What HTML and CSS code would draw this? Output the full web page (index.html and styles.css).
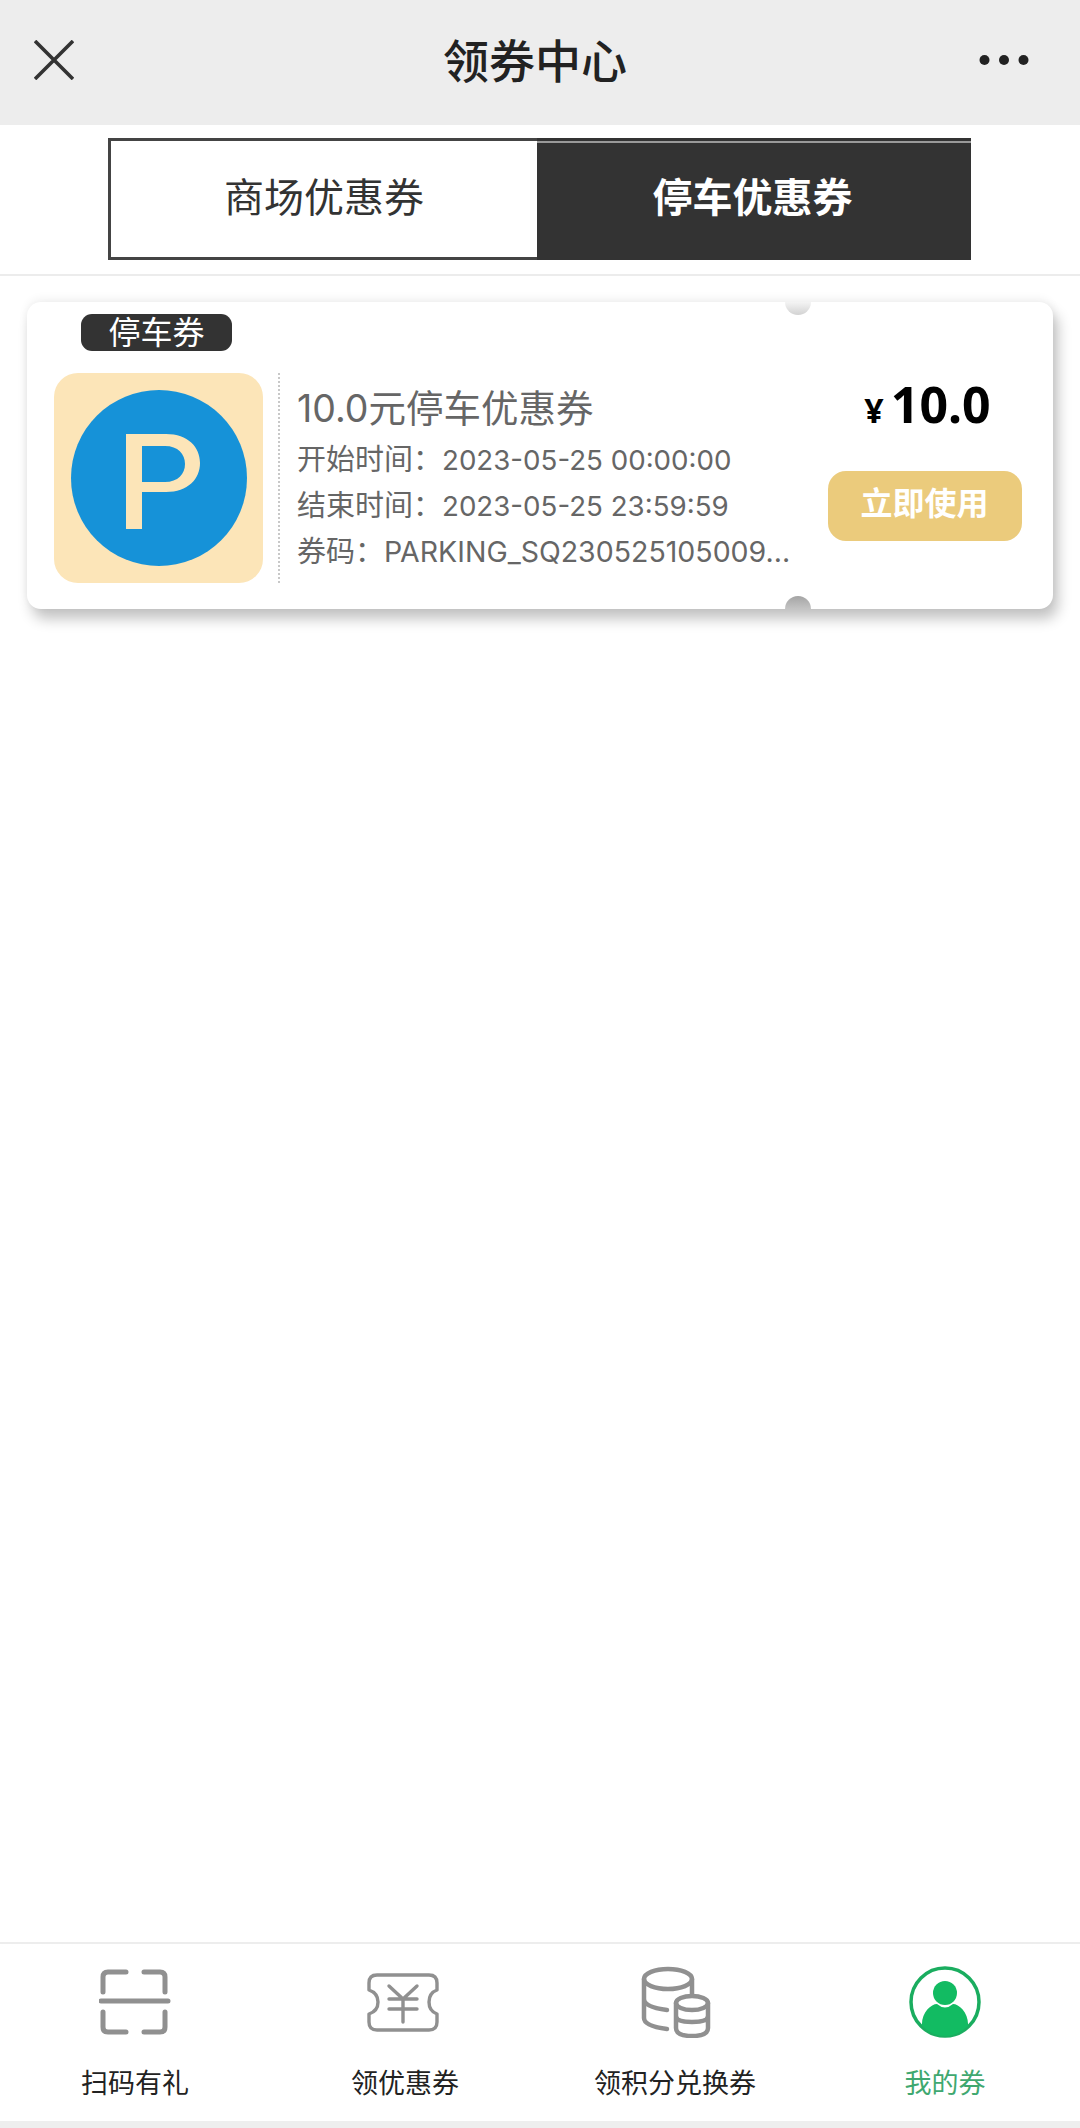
FILE: index.html
```html
<!DOCTYPE html>
<html lang="zh">
<head>
<meta charset="utf-8">
<title>领券中心</title>
<link rel="stylesheet" href="styles.css">
</head>
<body>
<div class="page">
  <header class="topbar">
    <svg class="close" viewBox="0 0 40 40" width="40" height="40"><path d="M1 1 39 39M39 1 1 39" fill="none" stroke="#333" stroke-width="3.600"/></svg>
    <h1 class="title">领券中心</h1>
    <svg class="more" viewBox="0 0 50 12" width="50" height="12"><circle cx="5.500" cy="6" r="5" fill="#222"/><circle cx="25" cy="6" r="5" fill="#222"/><circle cx="44.500" cy="6" r="5" fill="#222"/></svg>
  </header>
  <nav class="tabs">
    <div class="tab">商场优惠券</div>
    <div class="tab tab-active">停车优惠券</div>
  </nav>
  <main class="content">
    <article class="coupon">
      <i class="notch notch-top"></i>
      <i class="notch notch-bottom"></i>
      <div class="coupon-left">
        <span class="tag">停车券</span>
        <div class="coupon-body">
          <div class="thumb">
            <svg viewBox="0 0 209 210" width="209" height="210">
              <rect width="209" height="210" rx="24" fill="#fce5b8"/>
              <circle cx="105" cy="105" r="88" fill="#1692d8"/>
              <path fill="#fce5b8" fill-rule="evenodd" d="M72 156V61H112C134 61 146 74 146 90C146 106 134 119 112 119H88V156ZM88 73V109H111C124 109 131 101 131 91C131 81 124 73 111 73Z"/>
            </svg>
          </div>
          <div class="info">
            <div class="info-title">10.0元停车优惠券</div>
            <div class="info-line">开始时间：<span class="date">2023-05-25 00:00:00</span></div>
            <div class="info-line">结束时间：<span class="date">2023-05-25 23:59:59</span></div>
            <div class="info-line">券码：<span class="code">PARKING_SQ230525105009...</span></div>
          </div>
        </div>
      </div>
      <div class="coupon-right">
        <div class="price"><span class="yen">¥</span><span class="amount">10.0</span></div>
        <div class="use-btn">立即使用</div>
      </div>
    </article>
  </main>
  <footer class="tabbar">
    <div class="tabbar-item">
      <svg class="tabbar-icon" viewBox="0 0 72 72" width="72" height="72" fill="none" stroke="#909090" stroke-width="5" stroke-linecap="round" stroke-linejoin="round"><path d="M27 6H9Q4 6 4 11V26M45 6H61Q66 6 66 11V26M4 46V61Q4 66 9 66H27M66 46V61Q66 66 61 66H45M2 35H69"/></svg>
      <span>扫码有礼</span>
    </div>
    <div class="tabbar-item">
      <svg class="tabbar-icon tabbar-icon-ticket" viewBox="0 0 72 72" width="72" height="72" fill="none" stroke="#909090" stroke-width="3.400" stroke-linecap="round" stroke-linejoin="round"><path d="M10 9H62Q70 9 70 17V24Q62 27 62 36Q62 45 70 48V56Q70 64 62 64H10Q2 64 2 56V48Q11 45 11 36Q11 27 2 24V17Q2 9 10 9Z"/><path d="M22 20 36 33 50 20M36 33V56M22 33H50M22 43H50"/></svg>
      <span>领优惠券</span>
    </div>
    <div class="tabbar-item">
      <svg class="tabbar-icon" viewBox="0 0 72 72" width="72" height="72" fill="none" stroke="#909090" stroke-width="4.500" stroke-linecap="round" stroke-linejoin="round"><ellipse cx="29" cy="13" rx="24" ry="10"/><path d="M5 13V52Q5 60 28 63M5 33Q5 41 28 44M53 13V28"/><ellipse cx="53" cy="37" rx="16" ry="7"/><path d="M37 37V62Q37 70 53 70Q69 70 69 62V37M37 50Q37 56 53 56Q69 56 69 50"/></svg>
      <span>领积分兑换券</span>
    </div>
    <div class="tabbar-item tabbar-item-active">
      <svg class="tabbar-icon" viewBox="0 0 72 72" width="72" height="72"><circle cx="36" cy="36" r="34" fill="none" stroke="#1aad5f" stroke-width="3.500"/><circle cx="36" cy="27" r="12" fill="#12bb62"/><path d="M13 60C12 47 22 38 28 38Q36 45 44 38C50 38 60 47 59 60Q49 70 36 70Q23 70 13 60Z" fill="#12bb62"/></svg>
      <span>我的券</span>
    </div>
  </footer>
  <div class="home-strip"></div>
</div>
</body>
</html>
```
FILE: styles.css
```css
* { box-sizing: border-box; }
html, body { margin: 0; padding: 0; }
body { font-family: "Noto Sans CJK SC", "Noto Sans", sans-serif; background: #fff; }
.page { width: 1080px; height: 2128px; display: flex; flex-direction: column; overflow: hidden; }

.topbar { height: 125px; flex: none; background: #ededed; display: flex; align-items: center; justify-content: space-between; padding: 0 51px 0 34px; position: relative; }
.title { position: absolute; left: 0; right: 10px; top: 32px; margin: 0; text-align: center; font-size: 46px; line-height: 52px; font-weight: 500; color: #222; }
.close { margin-top: -6px; }
.more { margin-top: -6px; }

.tabs { flex: none; width: 863px; height: 122px; margin: 13px 0 0 108px; display: flex; border-top: 3px solid #444; border-bottom: 3px solid #444; border-left: 3px solid #444; }
.tab { flex: 1 1 0; display: flex; align-items: center; justify-content: center; padding-bottom: 9px; font-size: 40px; color: #333; background: #fff; }
.tab-active { background: #333; color: #fff; font-weight: 700; margin: -3px 0; flex: none; width: 434px; padding-right: 3px; box-shadow: inset 0 3px 0 #333, inset 0 5px 0 #9a9a9a; }

.content { flex: 1; margin-top: 14px; border-top: 2px solid #ececec; padding: 26px 27px 0; }
.coupon { position: relative; height: 307px; background: #fff; border-radius: 14px; box-shadow: 5px 10px 14px rgba(0, 0, 0, .24), 0 -3px 10px rgba(0, 0, 0, .06); display: flex; }
.notch { position: absolute; left: 758px; width: 26px; height: 13px; }
.notch-top { top: 0; border-radius: 0 0 13px 13px; background: linear-gradient(#f4f4f4, #d2d2d2); }
.notch-bottom { bottom: 0; border-radius: 13px 13px 0 0; background: linear-gradient(#a4a4a4, #c4c4c4); }

.coupon-left { width: 771px; flex: none; padding: 12px 0 0 27px; }
.tag { display: block; width: 151px; height: 37px; margin-left: 27px; border-radius: 11px; background: #333; color: #fff; font-size: 32px; line-height: 33px; text-align: center; }
.coupon-body { display: flex; margin-top: 22px; }
.thumb { flex: none; width: 209px; height: 210px; }
.thumb svg { display: block; }
.info { margin-left: 15px; padding-left: 17px; border-left: 2px dotted #c8c8c8; min-width: 0; width: 515px; color: #666; font-family: Inter, "Noto Sans CJK SC", sans-serif; }
.info-title { font-size: 37.500px; line-height: 44px; margin: 14px 0 6px; white-space: nowrap; }
.info-line { font-size: 29px; line-height: 45px; white-space: nowrap; }
.date { font-size: 27.700px; }
.code { font-size: 28.500px; }

.coupon-right { flex: 1; display: flex; flex-direction: column; align-items: center; padding-top: 72px; font-family: "Noto Sans", "Noto Sans CJK SC", sans-serif; }
.price { height: 60px; margin-left: 4px; display: flex; align-items: baseline; color: #000; font-weight: 700; line-height: 60px; }
.yen { font-size: 34px; margin-right: 7px; }
.amount { font-size: 50px; }
.use-btn { width: 194px; height: 70px; margin: 37px 0 0 -2px; border-radius: 18px; background: #ebcb7c; color: #fff; font-size: 32px; font-weight: 700; line-height: 60px; text-align: center; font-family: "Noto Sans CJK SC", sans-serif; }

.tabbar { flex: none; height: 179px; border-top: 2px solid #ededed; display: grid; grid-template-columns: repeat(4, 270px); }
.tabbar-item { display: flex; flex-direction: column; align-items: center; font-size: 27px; line-height: 38px; color: #222; padding-top: 22px; }
.tabbar-icon { display: block; margin-bottom: 25px; }
.tabbar-icon-ticket { margin-left: -5px; }
.tabbar-item-active { color: #3fa870; }
.home-strip { flex: none; height: 7px; background: #eeeeee; }
```
